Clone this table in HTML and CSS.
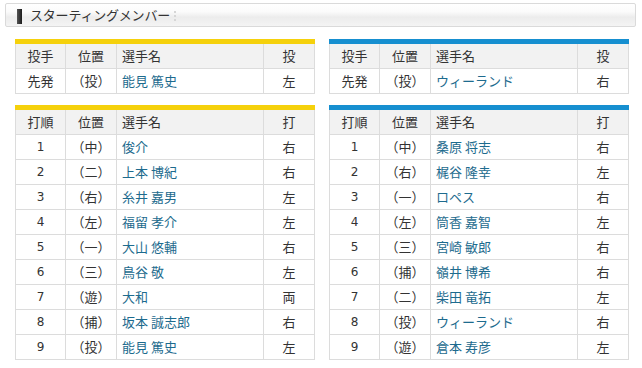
FILE: index.html
```html
<!DOCTYPE html>
<html lang="ja">
<head>
<meta charset="utf-8">
<title>スターティングメンバー</title>
<link rel="stylesheet" href="styles.css">
</head>
<body>
<div class="page">
  <div class="title-box">
    <span class="title-mark"></span>
    <h2 class="title">スターティングメンバー</h2>
    <span class="title-sep"></span>
  </div>

  <div class="pair pair-pitch">
    <div class="team team-home">
      <table class="lineup">
        <colgroup><col class="c1"><col class="c2"><col class="c3"><col class="c4"></colgroup>
        <tr class="head"><th>投手</th><th>位置</th><th class="name">選手名</th><th>投</th></tr>
        <tr><td>先発</td><td>（投）</td><td class="name"><a href="#">能見 篤史</a></td><td>左</td></tr>
      </table>
    </div>
    <div class="team team-away">
      <table class="lineup">
        <colgroup><col class="c1"><col class="c2"><col class="c3"><col class="c4"></colgroup>
        <tr class="head"><th>投手</th><th>位置</th><th class="name">選手名</th><th>投</th></tr>
        <tr><td>先発</td><td>（投）</td><td class="name"><a href="#">ウィーランド</a></td><td>右</td></tr>
      </table>
    </div>
  </div>

  <div class="pair">
    <div class="team team-home">
      <table class="lineup">
        <colgroup><col class="c1"><col class="c2"><col class="c3"><col class="c4"></colgroup>
        <tr class="head"><th>打順</th><th>位置</th><th class="name">選手名</th><th>打</th></tr>
        <tr><td class="num">1</td><td>（中）</td><td class="name"><a href="#">俊介</a></td><td>右</td></tr>
        <tr><td class="num">2</td><td>（二）</td><td class="name"><a href="#">上本 博紀</a></td><td>右</td></tr>
        <tr><td class="num">3</td><td>（右）</td><td class="name"><a href="#">糸井 嘉男</a></td><td>左</td></tr>
        <tr><td class="num">4</td><td>（左）</td><td class="name"><a href="#">福留 孝介</a></td><td>左</td></tr>
        <tr><td class="num">5</td><td>（一）</td><td class="name"><a href="#">大山 悠輔</a></td><td>右</td></tr>
        <tr><td class="num">6</td><td>（三）</td><td class="name"><a href="#">鳥谷 敬</a></td><td>左</td></tr>
        <tr><td class="num">7</td><td>（遊）</td><td class="name"><a href="#">大和</a></td><td>両</td></tr>
        <tr><td class="num">8</td><td>（捕）</td><td class="name"><a href="#">坂本 誠志郎</a></td><td>右</td></tr>
        <tr><td class="num">9</td><td>（投）</td><td class="name"><a href="#">能見 篤史</a></td><td>左</td></tr>
      </table>
    </div>
    <div class="team team-away">
      <table class="lineup">
        <colgroup><col class="c1"><col class="c2"><col class="c3"><col class="c4"></colgroup>
        <tr class="head"><th>打順</th><th>位置</th><th class="name">選手名</th><th>打</th></tr>
        <tr><td class="num">1</td><td>（中）</td><td class="name"><a href="#">桑原 将志</a></td><td>右</td></tr>
        <tr><td class="num">2</td><td>（右）</td><td class="name"><a href="#">梶谷 隆幸</a></td><td>左</td></tr>
        <tr><td class="num">3</td><td>（一）</td><td class="name"><a href="#">ロペス</a></td><td>右</td></tr>
        <tr><td class="num">4</td><td>（左）</td><td class="name"><a href="#">筒香 嘉智</a></td><td>左</td></tr>
        <tr><td class="num">5</td><td>（三）</td><td class="name"><a href="#">宮崎 敏郎</a></td><td>右</td></tr>
        <tr><td class="num">6</td><td>（捕）</td><td class="name"><a href="#">嶺井 博希</a></td><td>右</td></tr>
        <tr><td class="num">7</td><td>（二）</td><td class="name"><a href="#">柴田 竜拓</a></td><td>左</td></tr>
        <tr><td class="num">8</td><td>（投）</td><td class="name"><a href="#">ウィーランド</a></td><td>右</td></tr>
        <tr><td class="num">9</td><td>（遊）</td><td class="name"><a href="#">倉本 寿彦</a></td><td>左</td></tr>
      </table>
    </div>
  </div>
</div>
</body>
</html>
```

FILE: styles.css
```css
html, body {
  margin: 0;
  padding: 0;
  background: #fff;
}

body {
  font-family: "Noto Sans CJK JP", "Noto Sans", sans-serif;
  color: #333;
  font-size: 13px;
}

.page {
  padding: 3px 6px 0 5px;
}

.title-box {
  height: 22px;
  border: 1px solid #dadada;
  border-radius: 2px;
  background: linear-gradient(#ffffff 0%, #fbfbfb 35%, #ececec 60%, #f4f4f4 100%);
  display: flex;
  align-items: center;
  padding-left: 11px;
}

.title-mark {
  width: 5px;
  height: 15px;
  background: linear-gradient(90deg, #555, #1a1a1a);
  margin-top: 3px;
}

.title {
  margin: 0 0 0 8px;
  font-size: 13px;
  font-weight: normal;
  color: #333;
  line-height: 22px;
  letter-spacing: -0.2px;
}

.title-sep {
  width: 0;
  height: 10px;
  border-left: 2px dotted #d6d6d6;
  margin-left: 4px;
  margin-top: 2px;
}

.pair {
  display: flex;
  gap: 14px;
  padding-left: 10px;
  margin-top: 12px;
}

.pair-pitch {
  margin-bottom: -1px;
}

.team {
  width: 300px;
  border-top: 5px solid #f5d10c;
}

.team-away {
  border-top-color: #168fd0;
}

.lineup {
  width: 300px;
  table-layout: fixed;
  border-collapse: separate;
  border-spacing: 0;
  border-left: 1px solid #dcdcdc;
}

.c1 { width: 50px; }
.c2 { width: 51px; }
.c3 { width: 147px; }
.c4 { width: 51px; }

.lineup th,
.lineup td {
  height: 24px;
  padding: 0;
  border-right: 1px solid #dcdcdc;
  border-bottom: 1px solid #dcdcdc;
  text-align: center;
  font-weight: normal;
  font-size: 13px;
  line-height: 24px;
  color: #333;
  white-space: nowrap;
}

.lineup .head th {
  background: #f2f2f2;
}

.lineup .name {
  text-align: left;
  padding-left: 5px;
}

.lineup .num {
  font-family: "DejaVu Sans", sans-serif;
  font-size: 12px;
}

.lineup a {
  color: #1d6b8e;
  text-decoration: none;
}
```
